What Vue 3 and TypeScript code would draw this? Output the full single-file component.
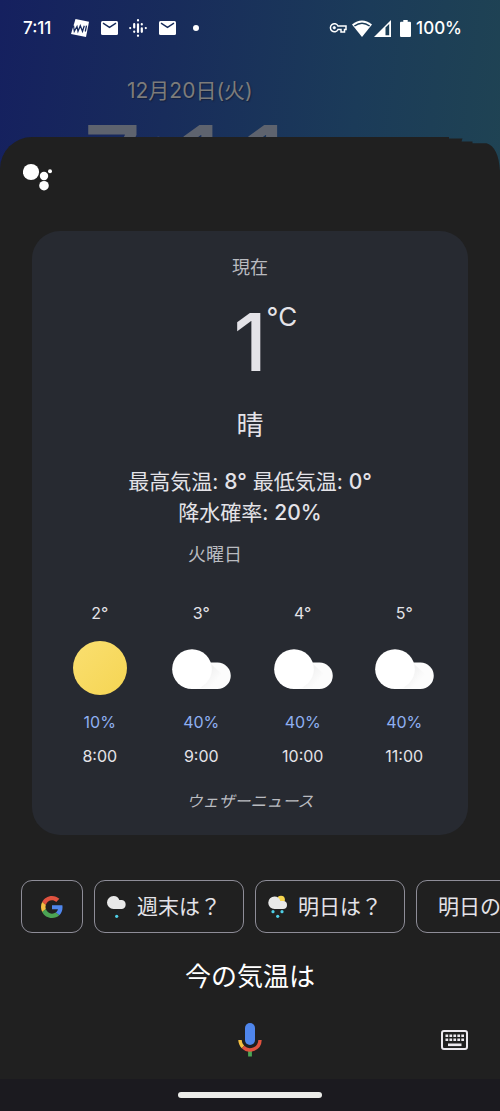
<script setup lang="ts">
interface HourForecast {
  time: string
  temperature: number
  rain: number
  sky: 'sunny' | 'cloudy'
}

interface Suggestion {
  label: string
  icon: 'google' | 'drizzle' | 'showers' | null
}

const hours: HourForecast[] = [
  { time: '8:00', temperature: 2, rain: 10, sky: 'sunny' },
  { time: '9:00', temperature: 3, rain: 40, sky: 'cloudy' },
  { time: '10:00', temperature: 4, rain: 40, sky: 'cloudy' },
  { time: '11:00', temperature: 5, rain: 40, sky: 'cloudy' },
]

const suggestions: Suggestion[] = [
  { label: '', icon: 'google' },
  { label: '週末は？', icon: 'drizzle' },
  { label: '明日は？', icon: 'showers' },
  { label: '明日の', icon: null },
]
</script>

<template>
  <div class="screen">
    <header class="status">
      <span class="status-time">7:11</span>
      <svg class="ic-news" width="18" height="18" viewBox="0 0 18 18">
        <path d="M4.500 0 18 2.800 15 18 0 15Z" fill="#fff" />
        <path d="M2.500 6.500 3.300 12.300 6 7.500 7 12.300 9.300 6.700 11.500 12.300 13.300 6.700M14.300 12.500 15.500 6.700" fill="none" stroke="#172a5c" stroke-width="1.300" />
      </svg>
      <svg class="ic-mail" width="17" height="14" viewBox="0 0 17 14">
        <rect width="17" height="14" rx="1.5" fill="#fff" />
        <path d="M2 2.200 8.500 6.300 15 2.200" fill="none" stroke="#182c5b" stroke-width="1.400" />
      </svg>
      <svg class="ic-pod" width="18" height="18" viewBox="0 0 18 18" fill="none" stroke="#fff" stroke-width="2.200" stroke-linecap="round">
        <path d="M1.200 9V9.100M5.200 5.200V8.500M5.200 12.500V12.800M9 1.200V1.500M9 5.300V13M9 16.600V16.800M12.800 5.200V5.500M12.800 9.300V12.800M16.800 9V9.100" />
      </svg>
      <svg class="ic-mail" width="17" height="14" viewBox="0 0 17 14">
        <rect width="17" height="14" rx="1.5" fill="#fff" />
        <path d="M2 2.200 8.500 6.300 15 2.200" fill="none" stroke="#182c5b" stroke-width="1.400" />
      </svg>
      <span class="more-dot"></span>
      <span class="spacer"></span>
      <svg class="ic-key" width="18" height="12" viewBox="0 0 18 12" fill="none" stroke="#fff" stroke-width="1.500">
        <path d="M9 4H17V7.500H15.500V10H12V7.500H9A4 4 0 1 1 9 4Z" />
        <circle cx="5.300" cy="5.700" r="1.200" fill="#fff" stroke-width="0.800" />
      </svg>
      <svg class="ic-wifi" width="20" height="17" viewBox="0 0 20 17">
        <path d="M0 4.500Q10-3.500 20 4.500L10 17Z" fill="#fff" />
        <path d="M2.400 6Q10 .4 17.600 6" fill="none" stroke="#1b3c58" stroke-width="1.500" />
      </svg>
      <svg class="ic-signal" width="17" height="17" viewBox="0 0 17 17">
        <path d="M0 17 17 0V17Z" fill="#fff" />
        <path d="M11.500 7.500 15.200 4V15.300H11.500Z" fill="#1c3f57" />
      </svg>
      <svg class="ic-battery" width="11" height="17" viewBox="0 0 11 17">
        <path d="M3.300 0H7.700V1.800H10Q11 1.800 11 3V15.800Q11 17 10 17H1Q0 17 0 15.800V3Q0 1.800 1 1.800H3.300Z" fill="#fff" />
      </svg>
      <span class="status-percent">100%</span>
    </header>

    <section class="lock">
      <p class="lock-date">12月20日(火)</p>
      <p class="lock-clock">7:11</p>
    </section>

    <main class="sheet">
      <div class="sheet-edge">
        <div class="edge-left"></div>
        <svg width="60" height="34" viewBox="0 0 60 34">
          <path d="M0 0H9V1.500H22.500L21.500 4.500H32.500V6.300H46.500Q58.500 10 60 34H0Z" fill="#202020" />
        </svg>
      </div>

      <div class="sheet-body">
        <svg class="assistant" width="30" height="28" viewBox="0 0 30 28" fill="#fff">
          <circle cx="8" cy="9" r="8.100" />
          <circle cx="21" cy="13" r="4.200" />
          <circle cx="27" cy="8.300" r="2" />
          <circle cx="21" cy="22.700" r="4.800" />
        </svg>

        <article class="card">
          <h1 class="now">現在</h1>
          <div class="current">
            <span class="degrees">1</span>
            <span class="unit">°C</span>
          </div>
          <p class="sky">晴</p>
          <p class="summary">最高気温: <b>8°</b> 最低気温: <b>0°</b><br />降水確率: <b>20%</b></p>
          <h2 class="weekday">火曜日</h2>
          <ul class="hours">
            <li v-for="hour in hours" :key="hour.time" class="hour">
              <span class="hour-temp">{{ hour.temperature }}°</span>
              <svg v-if="hour.sky === 'sunny'" width="60" height="56" viewBox="0 0 60 56">
                <defs>
                  <linearGradient id="sun" x1="0" y1="0" x2="1" y2="1">
                    <stop offset="0" stop-color="#fadf70" />
                    <stop offset="1" stop-color="#f5d553" />
                  </linearGradient>
                </defs>
                <circle cx="30" cy="28" r="27" fill="url(#sun)" />
              </svg>
              <svg v-else width="60" height="56" viewBox="0 0 60 56">
                <defs>
                  <linearGradient :id="'shade' + hour.temperature" x1="0" y1="0" x2="1" y2="1">
                    <stop offset="0.300" stop-color="#f1f1f1" />
                    <stop offset="0.700" stop-color="#fcfcfc" />
                  </linearGradient>
                </defs>
                <path d="M30 22.500H46.500A13.250 13.250 0 0 1 46.500 49H20Z" fill="#fcfcfc" />
                <path d="M40 24 52 35 44 48H30Z" :fill="'url(#shade' + hour.temperature + ')'" />
                <circle cx="21" cy="29.150" r="19.850" fill="#fff" />
              </svg>
              <span class="hour-rain">{{ hour.rain }}%</span>
              <span class="hour-time">{{ hour.time }}</span>
            </li>
          </ul>
          <p class="source">ウェザーニュース</p>
        </article>

        <nav class="chips">
          <button
            v-for="(chip, index) in suggestions"
            :key="index"
            type="button"
            class="chip"
            :class="{ 'chip-logo': chip.icon === 'google', 'chip-plain': chip.icon === null }"
            :aria-label="chip.label || 'Google'"
          >
            <svg v-if="chip.icon === 'google'" width="22" height="22" viewBox="0 0 48 48">
              <path fill="#e0523f" d="M24 9.500c3.540 0 6.710 1.220 9.210 3.600l6.850-6.850C35.900 2.380 30.470 0 24 0 14.620 0 6.510 5.380 2.560 13.220l7.980 6.190C12.430 13.720 17.740 9.500 24 9.500z" />
              <path fill="#4f86ec" d="M46.980 24.550c0-1.570-.15-3.090-.38-4.550H24v9.020h12.940c-.58 2.960-2.260 5.480-4.780 7.180l7.730 6c4.510-4.180 7.090-10.360 7.090-17.650z" />
              <path fill="#f3bf42" d="M10.530 28.590c-.48-1.450-.76-2.990-.76-4.590s.27-3.140.76-4.590l-7.980-6.190C.92 16.460 0 20.120 0 24c0 3.880.92 7.540 2.560 10.780l7.970-6.190z" />
              <path fill="#4ca454" d="M24 48c6.480 0 11.930-2.130 15.890-5.810l-7.730-6c-2.150 1.450-4.920 2.300-8.160 2.300-6.260 0-11.570-4.220-13.470-9.910l-7.980 6.190C6.510 42.620 14.620 48 24 48z" />
            </svg>
            <svg v-else-if="chip.icon === 'drizzle'" width="20" height="24" viewBox="0 0 20 24">
              <path d="M6.500 1A6 6 0 0 1 12.300 5H15A4.600 4.600 0 0 1 15 14H6.500A6.500 6.500 0 0 1 6.500 1Z" fill="#e9e9e9" />
              <circle cx="9.700" cy="21.300" r="1.600" fill="#4fd0e7" />
            </svg>
            <svg v-else-if="chip.icon === 'showers'" width="20" height="24" viewBox="0 0 20 24">
              <circle cx="13" cy="4.700" r="3.900" fill="#f7d64f" />
              <path d="M6.500 1.500A6 6 0 0 1 12.300 6H15A4 4 0 0 1 15 14H6.500A6.250 6.250 0 0 1 6.500 1.500Z" fill="#e9e9e9" />
              <g fill="#4fd0e7">
                <circle cx="5" cy="16.700" r="1.600" />
                <circle cx="14" cy="16.700" r="1.600" />
                <circle cx="9.700" cy="21.300" r="1.600" />
              </g>
            </svg>
            <span v-if="chip.label">{{ chip.label }}</span>
          </button>
        </nav>

        <p class="query">今の気温は</p>

        <div class="controls">
          <button type="button" class="control control-mic" aria-label="音声入力">
            <svg width="24" height="34" viewBox="0 0 24 34">
              <path d="M12 28V33.500" stroke="#4ca454" stroke-width="3.800" />
              <path d="M2 17A10 10 0 0 0 5 24" fill="none" stroke="#f3bf42" stroke-width="3.400" />
              <path d="M5 24A10 10 0 0 0 22 17" fill="none" stroke="#e0523f" stroke-width="3.400" />
              <rect x="7" width="10" height="22" rx="5" fill="#4f86ec" />
            </svg>
          </button>
          <button type="button" class="control control-keyboard" aria-label="キーボード">
            <svg width="27" height="20" viewBox="0 0 27 20">
              <rect x="1" y="1" width="25" height="18" rx="2" fill="none" stroke="#ece9ee" stroke-width="2" />
              <path d="M4.500 5.700H23M4.500 9.700H23" stroke="#ece9ee" stroke-width="2.600" stroke-dasharray="2.700 1.250" />
              <path d="M7 14.800H20.500" stroke="#ece9ee" stroke-width="2.600" />
            </svg>
          </button>
        </div>
      </div>
    </main>

    <footer class="gesture">
      <span class="gesture-bar"></span>
    </footer>
  </div>
</template>

<style>
body {
  margin: 0;
  background: #1b1a1f;
}
</style>

<style scoped>
.screen {
  min-height: 100vh;
  display: flex;
  flex-direction: column;
  overflow: hidden;
  font-family: Inter, 'Noto Sans CJK JP', sans-serif;
  color: #e4e3e8;
  background: linear-gradient(97deg, #15205f 0, #182c5b 28%, #1b3b59 58%, #22494f 100%);
}

p,
h1,
h2,
ul {
  margin: 0;
  padding: 0;
  font-weight: 400;
}

svg {
  display: block;
  flex: none;
}

button {
  font: inherit;
  color: inherit;
  background: none;
  cursor: pointer;
}

.status {
  display: flex;
  align-items: center;
  height: 56px;
  padding: 0 38px 0 23px;
  color: #fff;
  font-size: 17px;
  font-weight: 500;
}

.status-time {
  width: 48px;
}

.ic-mail {
  margin-left: 12px;
}

.ic-pod {
  margin-left: 11px;
}

.more-dot {
  width: 6px;
  height: 6px;
  margin-left: 17px;
  border-radius: 50%;
  background: #fff;
}

.spacer {
  flex: 1;
}

.ic-wifi {
  margin-left: 5px;
}

.ic-signal {
  margin-left: 2px;
}

.ic-battery {
  margin: 0 5px 0 9px;
}

.lock {
  height: 81px;
  padding-left: 80px;
  overflow: hidden;
}

.lock-date {
  padding: 20px 0 0 47px;
  font-size: 21px;
  line-height: 30px;
  color: #7d7c7b;
  text-shadow: 1px 1px 1px #14213f;
}

.lock-clock {
  font-size: 100px;
  line-height: 112px;
  font-weight: 500;
  font-variant-numeric: tabular-nums;
  color: #5e636e;
}

.sheet {
  flex: 1;
  display: flex;
  flex-direction: column;
}

.sheet-edge {
  display: flex;
}

.edge-left {
  flex: 1;
  border-top-left-radius: 32px;
  background: #202020;
}

.sheet-body {
  flex: 1;
  background: #202020;
}

.assistant {
  margin: -8px 0 0 23px;
}

.card {
  margin: 40px 32px 0;
  padding: 23px 0 22px;
  border-radius: 28px;
  background: #272a31;
  text-align: center;
}

.now {
  font-size: 18px;
  line-height: 28px;
  color: #b9bbc0;
}

.current {
  display: grid;
  grid-template-columns: 1fr auto 1fr;
  margin-top: 20px;
}

.degrees {
  grid-column: 2;
  font-size: 80px;
  line-height: 80px;
  font-weight: 500;
}

.unit {
  font-size: 26px;
  line-height: 30px;
  text-align: left;
}

.sky {
  margin-top: 24px;
  font-size: 27px;
  line-height: 40px;
}

.summary {
  margin-top: 20px;
  font-size: 21px;
  line-height: 31px;
}

.summary b {
  font-weight: 500;
}

.weekday {
  padding-right: 70px;
  margin-top: 13px;
  font-size: 18px;
  line-height: 28px;
  color: #b9bbc0;
}

.hours {
  display: grid;
  grid-template-columns: repeat(4, 1fr);
  margin: 32px 13px 0 17px;
  list-style: none;
  font-size: 16px;
  line-height: 24px;
}

.hour {
  display: flex;
  flex-direction: column;
  align-items: center;
}

.hour svg {
  margin: 15px 0 14px;
}

.hour-rain {
  color: #8fb0f2;
}

.hour-time {
  margin-top: 10px;
}

.source {
  margin-top: 21px;
  font-size: 16px;
  line-height: 24px;
  font-style: italic;
  color: #b9bbc0;
}

.chips {
  display: flex;
  gap: 11px;
  margin-top: 45px;
  padding-left: 21px;
  overflow: hidden;
}

.chip {
  flex: none;
  display: flex;
  align-items: center;
  gap: 10px;
  height: 53px;
  padding: 0 22px 0 12px;
  border: 1px solid #8e8d98;
  border-radius: 11px;
  font-size: 21px;
  line-height: 31px;
}

.chip-logo {
  padding: 0 19px;
}

.chip-plain {
  padding: 0 21px;
}

.query {
  margin-top: 24px;
  font-size: 26px;
  line-height: 40px;
  text-align: center;
  color: #fff;
}

.controls {
  display: grid;
  grid-template-columns: 1fr auto 1fr;
  align-items: center;
  padding: 22px 28px 15px;
}

.control {
  padding: 4px;
  border: 0;
}

.control-mic {
  grid-column: 2;
}

.control-keyboard {
  justify-self: end;
}

.gesture {
  display: flex;
  justify-content: center;
  padding: 13px 0;
  background: #1b1a1f;
}

.gesture-bar {
  width: 144px;
  height: 6px;
  border-radius: 3px;
  background: #ecece9;
}
</style>
